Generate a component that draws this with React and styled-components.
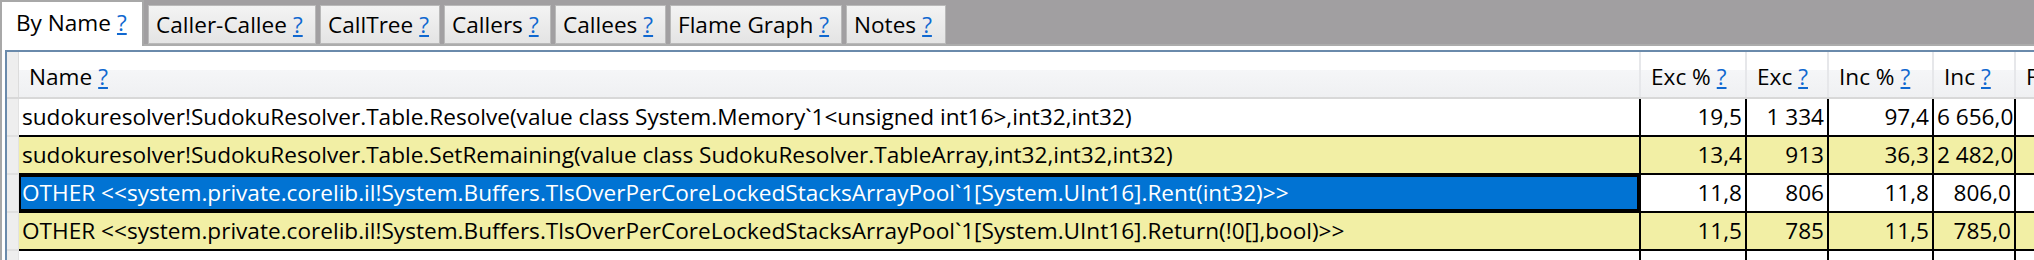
import React from "react";
import styled, { createGlobalStyle } from "styled-components";

const GlobalStyle = createGlobalStyle`
  html, body {
    margin: 0;
    padding: 0;
    background: #fff;
    overflow: hidden;
  }
  body {
    font-family: "Open Sans", "Noto Sans", sans-serif;
    font-size: 22.6px;
    color: #000;
  }
`;

const TABS = [
  { label: "By Name", width: 144, active: true },
  { label: "Caller-Callee", width: 168 },
  { label: "CallTree", width: 120 },
  { label: "Callers", width: 107 },
  { label: "Callees", width: 111 },
  { label: "Flame Graph", width: 172 },
  { label: "Notes", width: 100 },
];

const COLUMNS = [
  { key: "name", title: "Name" },
  { key: "excPct", title: "Exc %", numeric: true },
  { key: "exc", title: "Exc", numeric: true },
  { key: "incPct", title: "Inc %", numeric: true },
  { key: "inc", title: "Inc", numeric: true },
  { key: "fold", title: "Fold", numeric: true },
];

const ROWS = [
  {
    name: "sudokuresolver!SudokuResolver.Table.Resolve(value class System.Memory`1<unsigned int16>,int32,int32)",
    excPct: "19,5",
    exc: "1 334",
    incPct: "97,4",
    inc: "6 656,0",
  },
  {
    name: "sudokuresolver!SudokuResolver.Table.SetRemaining(value class SudokuResolver.TableArray,int32,int32,int32)",
    excPct: "13,4",
    exc: "913",
    incPct: "36,3",
    inc: "2 482,0",
  },
  {
    name: "OTHER <<system.private.corelib.il!System.Buffers.TlsOverPerCoreLockedStacksArrayPool`1[System.UInt16].Rent(int32)>>",
    excPct: "11,8",
    exc: "806",
    incPct: "11,8",
    inc: "806,0",
    selected: true,
  },
  {
    name: "OTHER <<system.private.corelib.il!System.Buffers.TlsOverPerCoreLockedStacksArrayPool`1[System.UInt16].Return(!0[],bool)>>",
    excPct: "11,5",
    exc: "785",
    incPct: "11,5",
    inc: "785,0",
  },
  { name: "", excPct: "", exc: "", incPct: "", inc: "" },
];

// row header + name + numeric columns (widths include the 2px grid line)
const GRID_COLUMNS = "12px 1622px 106px 82px 105px 82px 120px";

const Window = styled.div`
  width: 2034px;
  height: 260px;
  overflow: hidden;
  display: flex;
  flex-direction: column;
`;

const TabStrip = styled.div`
  display: flex;
  align-items: flex-end;
  gap: 4px;
  height: 46px;
  flex-shrink: 0;
  background: linear-gradient(to bottom, #a19fa1 0, #a19fa1 44px, #acacac 44px);
`;

const Tab = styled.div`
  box-sizing: border-box;
  display: flex;
  align-items: center;
  flex-shrink: 0;
  width: ${({ $width }) => $width}px;
  white-space: nowrap;
  overflow: hidden;
  ${({ $active }) =>
    $active
      ? `
    height: 46px;
    padding: 0 0 4px 14px;
    background: #fff;
    border: 2px solid #a8a8a8;
    border-bottom: none;
  `
      : `
    height: 39px;
    margin-bottom: 2px;
    padding: 0 0 0 7px;
    background: linear-gradient(to bottom, #f3f3f3, #e4e4e4);
    border: 1px solid #b9b9b9;
  `}
`;

const Help = styled.span`
  margin-left: 6px;
  color: #1068d0;
  text-decoration: underline;
  text-underline-offset: 2px;
`;

const Panel = styled.div`
  flex: 1;
  display: flex;
  border-left: 2px solid #a8a8a8;
  padding: 4px 0 0 3px;
  background: #fff;
  min-height: 0;
`;

const Grid = styled.div`
  flex: 1;
  border-top: 2px solid #6a8aab;
  border-left: 2px solid #6a8aab;
  overflow: hidden;
`;

const HeaderRow = styled.div`
  display: grid;
  grid-template-columns: ${GRID_COLUMNS};
  height: 47px;
  border-bottom: 2px solid #d8d8d8;
  box-sizing: border-box;
  background: linear-gradient(to bottom, #fff 0, #fff 18px, #f5f6f8 18px, #eff0f2 100%);
`;

const CornerCell = styled.div`
  background: #eeeeee;
  border-right: 1px solid #dcdcdc;
`;

const HeaderCell = styled.div`
  box-sizing: border-box;
  display: flex;
  align-items: center;
  padding: 4px 0 0 10px;
  white-space: nowrap;
  overflow: hidden;
  border-right: 2px solid #e6e7ea;
`;

const Row = styled.div`
  display: grid;
  grid-template-columns: ${GRID_COLUMNS};
  height: 38px;
`;

const RowHeader = styled.div`
  background: #eeeeee;
  border-bottom: 2px solid #e0e0e0;
  border-right: 1px solid #e2e2e2;
`;

const Cell = styled.div`
  box-sizing: border-box;
  height: 38px;
  line-height: 35px;
  padding: 0 3px;
  white-space: nowrap;
  overflow: hidden;
  text-align: ${({ $numeric }) => ($numeric ? "right" : "left")};
  background: ${({ $shade }) => ($shade ? "#f2efa5" : "#fff")};
  border-right: 2px solid #000;
  border-bottom: 2px solid #000;

  &[data-selected="true"] {
    background: #0173d3;
    color: #fff;
    box-shadow: inset 0 0 0 2px #000;
  }
`;

export default function App() {
  return (
    <Window>
      <GlobalStyle />
      <TabStrip>
        {TABS.map((tab) => (
          <Tab key={tab.label} $active={tab.active} $width={tab.width}>
            {tab.label}
            <Help>?</Help>
          </Tab>
        ))}
      </TabStrip>
      <Panel>
        <Grid>
          <HeaderRow>
            <CornerCell />
            {COLUMNS.map((col) => (
              <HeaderCell key={col.key}>
                {col.title}
                <Help>?</Help>
              </HeaderCell>
            ))}
          </HeaderRow>
          {ROWS.map((row, i) => (
            <Row key={i}>
              <RowHeader />
              {COLUMNS.map((col) => (
                <Cell
                  key={col.key}
                  $numeric={col.numeric}
                  $shade={i % 2 === 1}
                  data-selected={row.selected && col.key === "name" ? "true" : undefined}
                >
                  {row[col.key] || ""}
                </Cell>
              ))}
            </Row>
          ))}
        </Grid>
      </Panel>
    </Window>
  );
}
